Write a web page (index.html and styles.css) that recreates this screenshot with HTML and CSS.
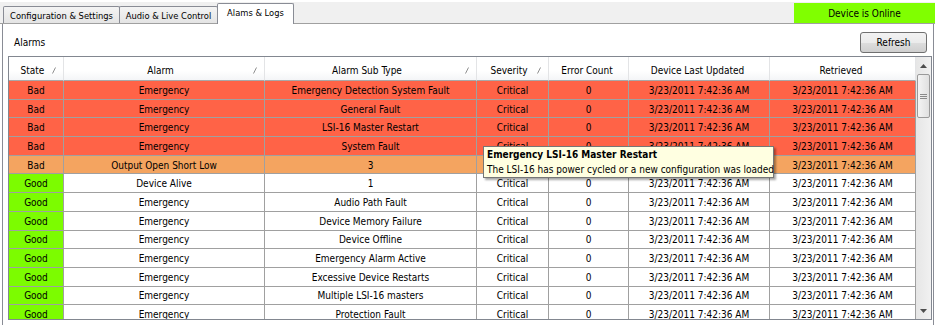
FILE: index.html
```html
<!DOCTYPE html>
<html lang="en">
<head>
    <meta charset="UTF-8">
    <title>Alarms &amp; Logs</title>
    <link rel="stylesheet" href="styles.css">
</head>
<body>
    <div class="window">
        <div class="tabstrip">
            <div class="tabs">
                <div class="tab tab-config">Configuration &amp; Settings</div>
                <div class="tab tab-audio">Audio &amp; Live Control</div>
                <div class="tab tab-logs active">Alams &amp; Logs</div>
            </div>
            <div class="status">Device is Online</div>
        </div>

        <div class="page">
            <div class="toolbar">
                <span class="toolbar-title">Alarms</span>
                <button class="btn">Refresh</button>
            </div>

            <div class="grid">
                <div class="grid-body">
                    <table class="alarms">
                        <colgroup>
                            <col class="c-state">
                            <col class="c-alarm">
                            <col class="c-sub">
                            <col class="c-sev">
                            <col class="c-count">
                            <col class="c-updated">
                            <col class="c-retrieved">
                        </colgroup>
                        <thead>
                            <tr class="head">
                                <th><div class="th-inner"><span class="th-label">State</span><svg class="sort" width="4" height="7" viewBox="0 0 4 7"><line x1="0.5" y1="6.5" x2="3.5" y2="0.5"/></svg></div></th>
                                <th><div class="th-inner"><span class="th-label">Alarm</span><svg class="sort" width="4" height="7" viewBox="0 0 4 7"><line x1="0.5" y1="6.5" x2="3.5" y2="0.5"/></svg></div></th>
                                <th><div class="th-inner"><span class="th-label">Alarm Sub Type</span><svg class="sort" width="4" height="7" viewBox="0 0 4 7"><line x1="0.5" y1="6.5" x2="3.5" y2="0.5"/></svg></div></th>
                                <th><div class="th-inner"><span class="th-label">Severity</span><svg class="sort" width="4" height="7" viewBox="0 0 4 7"><line x1="0.5" y1="6.5" x2="3.5" y2="0.5"/></svg></div></th>
                                <th><div class="th-inner"><span class="th-label">Error Count</span></div></th>
                                <th><div class="th-inner"><span class="th-label">Device Last Updated</span></div></th>
                                <th><div class="th-inner"><span class="th-label">Retrieved</span></div></th>
                            </tr>
                        </thead>
                        <tbody>
                            <tr class="bad"><td>Bad</td><td>Emergency</td><td>Emergency Detection System Fault</td><td>Critical</td><td>0</td><td>3/23/2011 7:42:36 AM</td><td>3/23/2011 7:42:36 AM</td></tr>
                            <tr class="bad"><td>Bad</td><td>Emergency</td><td>General Fault</td><td>Critical</td><td>0</td><td>3/23/2011 7:42:36 AM</td><td>3/23/2011 7:42:36 AM</td></tr>
                            <tr class="bad"><td>Bad</td><td>Emergency</td><td>LSI-16 Master Restart</td><td>Critical</td><td>0</td><td>3/23/2011 7:42:36 AM</td><td>3/23/2011 7:42:36 AM</td></tr>
                            <tr class="bad"><td>Bad</td><td>Emergency</td><td>System Fault</td><td>Critical</td><td>0</td><td>3/23/2011 7:42:36 AM</td><td>3/23/2011 7:42:36 AM</td></tr>
                            <tr class="warn"><td>Bad</td><td>Output Open Short Low</td><td>3</td><td>Warning</td><td>0</td><td>3/23/2011 7:42:36 AM</td><td>3/23/2011 7:42:36 AM</td></tr>
                            <tr><td class="good">Good</td><td>Device Alive</td><td>1</td><td>Critical</td><td>0</td><td>3/23/2011 7:42:36 AM</td><td>3/23/2011 7:42:36 AM</td></tr>
                            <tr><td class="good">Good</td><td>Emergency</td><td>Audio Path Fault</td><td>Critical</td><td>0</td><td>3/23/2011 7:42:36 AM</td><td>3/23/2011 7:42:36 AM</td></tr>
                            <tr><td class="good">Good</td><td>Emergency</td><td>Device Memory Failure</td><td>Critical</td><td>0</td><td>3/23/2011 7:42:36 AM</td><td>3/23/2011 7:42:36 AM</td></tr>
                            <tr><td class="good">Good</td><td>Emergency</td><td>Device Offline</td><td>Critical</td><td>0</td><td>3/23/2011 7:42:36 AM</td><td>3/23/2011 7:42:36 AM</td></tr>
                            <tr><td class="good">Good</td><td>Emergency</td><td>Emergency Alarm Active</td><td>Critical</td><td>0</td><td>3/23/2011 7:42:36 AM</td><td>3/23/2011 7:42:36 AM</td></tr>
                            <tr><td class="good">Good</td><td>Emergency</td><td>Excessive Device Restarts</td><td>Critical</td><td>0</td><td>3/23/2011 7:42:36 AM</td><td>3/23/2011 7:42:36 AM</td></tr>
                            <tr><td class="good">Good</td><td>Emergency</td><td>Multiple LSI-16 masters</td><td>Critical</td><td>0</td><td>3/23/2011 7:42:36 AM</td><td>3/23/2011 7:42:36 AM</td></tr>
                            <tr><td class="good">Good</td><td>Emergency</td><td>Protection Fault</td><td>Critical</td><td>0</td><td>3/23/2011 7:42:36 AM</td><td>3/23/2011 7:42:36 AM</td></tr>
                        </tbody>
                    </table>
                </div>

                <div class="vscroll">
                    <div class="sb-btn">
                        <svg width="7" height="4" viewBox="0 0 7 4"><path d="M0 4 L3.5 0 L7 4 Z"/></svg>
                    </div>
                    <div class="sb-thumb">
                        <svg width="7" height="7" viewBox="0 0 7 7"><path d="M0 1.5 H7 M0 3.5 H7 M0 5.5 H7"/></svg>
                    </div>
                    <div class="sb-track"></div>
                    <div class="sb-btn">
                        <svg width="7" height="4" viewBox="0 0 7 4"><path d="M0 0 L3.5 4 L7 0 Z"/></svg>
                    </div>
                </div>
            </div>
        </div>

        <!-- hover tooltip over the grid -->
        <div class="tooltip">
            <div class="tooltip-title">Emergency LSI-16 Master Restart</div>
            <div>The LSI-16 has power cycled or a new configuration was loaded</div>
        </div>
    </div>
</body>
</html>
```

FILE: styles.css
```css
body {
    margin: 0;
    font-family: "DejaVu Sans Condensed", "DejaVu Sans", sans-serif;
    font-stretch: condensed;
    font-size: 10px;
    color: #000;
    background-color: #fff;
}

.window {
    position: relative;
    width: 935px;
    height: 325px;
    overflow: hidden;
}

/* tab strip */
.tabstrip {
    display: flex;
    align-items: flex-end;
    justify-content: space-between;
    margin-top: 2px;
    height: 21px;
    padding-left: 3px;
    background-color: #f0f0f0;
    border-bottom: 1px solid #a0a0a0;
}

.tabs {
    display: flex;
    align-items: flex-end;
    height: 100%;
}

.tab {
    box-sizing: border-box;
    display: flex;
    align-items: center;
    justify-content: center;
    height: 17px;
    margin-right: -1px;
    padding-top: 1px;
    font-size: 9.3px;
    border: 1px solid #898c95;
    border-bottom: none;
    border-radius: 2px 2px 0 0;
    background: linear-gradient(#f4f4f4, #e4e4e4);
}

.tab-config { width: 117px; }
.tab-audio { width: 99px; }
.tab-logs { width: 77px; }

.tab.active {
    position: relative;
    z-index: 1;
    height: 21px;
    margin-bottom: -1px;
    padding: 0 0 3px;
    background: #fff;
}

.status {
    align-self: flex-start;
    display: flex;
    align-items: center;
    justify-content: center;
    width: 141px;
    height: 20px;
    margin-top: 1px;
    background-color: #80ff00;
}

/* tab page */
.page {
    box-sizing: border-box;
    height: 302px;
    margin: 0 1px 0 2px;
    border-left: 1px solid #898c95;
    border-right: 1px solid #898c95;
    background-color: #fff;
}

.toolbar {
    display: flex;
    align-items: center;
    justify-content: space-between;
    padding: 8px 6px 0 11px;
}

.btn {
    box-sizing: border-box;
    width: 67px;
    height: 21px;
    padding: 0;
    font: inherit;
    color: #000;
    border: 1px solid #707070;
    border-radius: 3px;
    background: linear-gradient(#f2f2f2 0%, #ebebeb 50%, #dddddd 51%, #cfcfcf 100%);
}

/* data grid */
.grid {
    box-sizing: border-box;
    display: flex;
    height: 264px;
    margin: 3px 1px 0 5px;
    border: 1px solid #828790;
    overflow: hidden;
}

.grid-body {
    width: 907px;
    overflow: hidden;
}

.alarms {
    table-layout: fixed;
    width: 907px;
    border-spacing: 0;
}

.c-state { width: 55px; }
.c-alarm { width: 201px; }
.c-sub { width: 212px; }
.c-sev { width: 72px; }
.c-count { width: 80px; }
.c-updated { width: 141px; }
.c-retrieved { width: 146px; }

.alarms tr {
    height: 18.7px;
}

.alarms tr.head {
    height: 24px;
}

.alarms th {
    padding: 3px 0 0;
    font-weight: normal;
    background: linear-gradient(#ffffff 0%, #ffffff 60%, #f4f5f7 100%);
    border-right: 1px solid #e3e4e6;
    border-bottom: 1px solid #a8a8a8;
}

.th-inner {
    display: flex;
    align-items: center;
    padding: 0 7px 0 4px;
}

.th-label {
    flex: 1;
    text-align: center;
    white-space: nowrap;
}

.sort line {
    stroke: #8e8e8e;
    stroke-width: 1;
}

.alarms td {
    padding: 2px 0 0;
    text-align: center;
    white-space: nowrap;
    overflow: hidden;
    line-height: 1;
    border-right: 1px solid #a0a0a0;
    border-bottom: 1px solid #a0a0a0;
    background-color: #fff;
}

.alarms tr.bad td {
    background-color: #ff6347;
}

.alarms tr.warn td {
    background-color: #f4a460;
}

.alarms td.good {
    background-color: #7cfc00;
}

/* scrollbar */
.vscroll {
    display: flex;
    flex-direction: column;
    width: 15px;
    background: linear-gradient(90deg, #e6e6e6, #f1f1f1);
}

.sb-btn {
    display: flex;
    align-items: center;
    justify-content: center;
    height: 17px;
}

.sb-btn path {
    fill: #4d4d4d;
}

.sb-thumb {
    box-sizing: border-box;
    display: flex;
    align-items: center;
    justify-content: center;
    height: 44px;
    margin: 0 1px;
    border: 1px solid #9a9a9a;
    border-radius: 2px;
    background: linear-gradient(90deg, #f4f4f4, #e0e0e0);
}

.sb-thumb path {
    stroke: #8a8a8a;
    stroke-width: 1;
}

.sb-track {
    flex: 1;
}

/* tooltip */
.tooltip {
    position: absolute;
    left: 483px;
    top: 146px;
    box-sizing: border-box;
    width: 291px;
    height: 32px;
    padding: 0 3px;
    line-height: 15px;
    white-space: nowrap;
    background-color: #ffffe1;
    border: 1px solid #767676;
    box-shadow: 2px 2px 2px rgba(0, 0, 0, 0.35);
}

.tooltip-title {
    font-weight: bold;
}
```
